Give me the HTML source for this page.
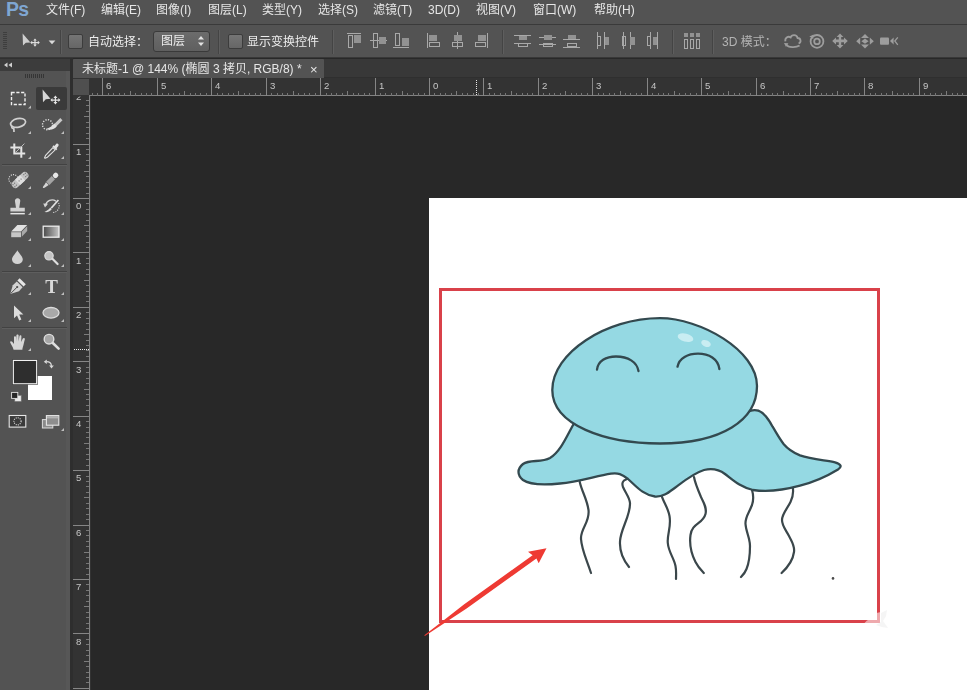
<!DOCTYPE html>
<html lang="zh-CN">
<head>
<meta charset="utf-8">
<title>Photoshop</title>
<style>
html,body{margin:0;padding:0;}
body{width:967px;height:690px;overflow:hidden;background:#282828;position:relative;
 font-family:"Liberation Sans","Noto Sans CJK SC",sans-serif;font-size:12px;color:#e4e4e4;}
.abs{position:absolute;}
#menubar{left:0;top:0;width:967px;height:24px;background:#535353;}
#menubar span,#optbar .t,#tab span{will-change:transform;}
#menubar span{position:absolute;top:2px;line-height:16px;white-space:nowrap;font-size:12px;color:#e6e6e6;}
#ps{position:absolute;left:6px;top:-3px;font-weight:bold;font-size:19.500px;color:#7fa6d2;letter-spacing:-0.8px;line-height:24px;}
#optbar{left:0;top:24px;width:967px;height:34px;background:#535353;border-top:1px solid #3a3a3a;border-bottom:1px solid #383838;box-sizing:border-box;}
#optbar .t{position:absolute;top:9px;line-height:16px;white-space:nowrap;font-size:12px;color:#ececec;}
.sep{position:absolute;top:5px;width:1px;height:24px;background:#444;border-right:1px solid #5e5e5e;}
.chk{position:absolute;top:9px;width:13px;height:13px;border:1px solid #3c3c3c;border-radius:2px;background:linear-gradient(#757575,#666);box-sizing:content-box;}
#sel{position:absolute;left:153px;top:6px;width:55px;height:19px;border:1px solid #3a3a3a;border-radius:3px;background:linear-gradient(#6c6c6c,#5f5f5f);}
#tabstrip{left:73px;top:59px;width:894px;height:19px;background:#383838;border-bottom:1px solid #2f2f2f;box-sizing:border-box;}
#tab{left:73px;top:59px;width:251px;height:19px;background:#535353;border-radius:1px 1px 0 0;}
#tab span{position:absolute;left:9px;top:2px;line-height:17px;font-size:12px;color:#e6e6e6;white-space:nowrap;}
#toolhead{left:0;top:58px;width:70px;height:13px;background:#3c3c3c;border-top:1px solid #303030;box-sizing:border-box;}
#toolbox{left:0;top:71px;width:66px;height:619px;background:#535353;border-right:4px solid #575757;}
#tooledge{left:70px;top:58px;width:3px;height:632px;background:#2e2e2e;}
#doc{left:73px;top:78px;width:894px;height:612px;background:#282828;}
svg{position:absolute;left:0;top:0;will-change:transform;}
.rl{font-family:"Liberation Sans",sans-serif;font-size:9.6px;fill:#c6c6c6;}
</style>
</head>
<body>
<div id="menubar" class="abs">
 <div id="ps">Ps</div>
 <span style="left:46px">文件(F)</span>
 <span style="left:101px">编辑(E)</span>
 <span style="left:156px">图像(I)</span>
 <span style="left:208px">图层(L)</span>
 <span style="left:262px">类型(Y)</span>
 <span style="left:318px">选择(S)</span>
 <span style="left:373px">滤镜(T)</span>
 <span style="left:428px">3D(D)</span>
 <span style="left:476px">视图(V)</span>
 <span style="left:533px">窗口(W)</span>
 <span style="left:594px">帮助(H)</span>
</div>
<div id="optbar" class="abs">
 <div class="sep" style="left:60px"></div>
 <div class="chk" style="left:68px"></div>
 <div class="t" style="left:88px">自动选择：</div>
 <div id="sel"><div class="t" style="left:7px;top:1px">图层</div></div>
 <div class="sep" style="left:218px"></div>
 <div class="chk" style="left:228px"></div>
 <div class="t" style="left:247px">显示变换控件</div>
 <div class="sep" style="left:332px"></div>
 <div class="sep" style="left:502px"></div>
 <div class="sep" style="left:672px"></div>
 <div class="sep" style="left:712px"></div>
 <div class="t" style="left:722px;color:#b4b4b4">3D 模式：</div>
</div>
<div id="tabstrip" class="abs"></div>
<div id="tab" class="abs"><span>未标题-1 @ 144% (椭圆 3 拷贝, RGB/8) *</span><span style="left:237px;font-size:13px">×</span></div>
<div id="toolhead" class="abs"></div>
<div id="toolbox" class="abs"></div>
<div id="tooledge" class="abs"></div>

<!-- main drawing layer -->
<svg width="967" height="690" viewBox="0 0 967 690">
 <!-- rulers -->
 <rect x="73" y="78" width="894" height="18" fill="#333333"/>
 <rect x="73" y="96" width="18" height="594" fill="#333333"/>
 <rect x="73" y="79" width="16" height="16" fill="#4f4f4f"/>
 <line x1="89" y1="95.5" x2="967" y2="95.5" stroke="#828282"/>
 <line x1="89.5" y1="96" x2="89.5" y2="690" stroke="#828282"/>
 <line x1="476.5" y1="80" x2="476.5" y2="95" stroke="#e8e8e8" stroke-dasharray="1 1" shape-rendering="crispEdges"/>
 <line x1="74" y1="349.5" x2="89" y2="349.5" stroke="#e8e8e8" stroke-dasharray="1 1" shape-rendering="crispEdges"/>
 <clipPath id="vrc"><rect x="73" y="96.500" width="17" height="600"/></clipPath>
 <g shape-rendering="crispEdges">
<line x1="92.5" y1="93" x2="92.5" y2="96" stroke="#767676"/>
<line x1="97.5" y1="93" x2="97.5" y2="96" stroke="#767676"/>
<line x1="102.5" y1="78" x2="102.5" y2="96" stroke="#868686"/>
<line x1="108.5" y1="93" x2="108.5" y2="96" stroke="#767676"/>
<line x1="113.5" y1="93" x2="113.5" y2="96" stroke="#767676"/>
<line x1="119.5" y1="93" x2="119.5" y2="96" stroke="#767676"/>
<line x1="124.5" y1="93" x2="124.5" y2="96" stroke="#767676"/>
<line x1="130.5" y1="91" x2="130.5" y2="96" stroke="#7c7c7c"/>
<line x1="135.5" y1="93" x2="135.5" y2="96" stroke="#767676"/>
<line x1="141.5" y1="93" x2="141.5" y2="96" stroke="#767676"/>
<line x1="146.5" y1="93" x2="146.5" y2="96" stroke="#767676"/>
<line x1="151.5" y1="93" x2="151.5" y2="96" stroke="#767676"/>
<line x1="157.5" y1="78" x2="157.5" y2="96" stroke="#868686"/>
<line x1="162.5" y1="93" x2="162.5" y2="96" stroke="#767676"/>
<line x1="168.5" y1="93" x2="168.5" y2="96" stroke="#767676"/>
<line x1="173.5" y1="93" x2="173.5" y2="96" stroke="#767676"/>
<line x1="179.5" y1="93" x2="179.5" y2="96" stroke="#767676"/>
<line x1="184.5" y1="91" x2="184.5" y2="96" stroke="#7c7c7c"/>
<line x1="190.5" y1="93" x2="190.5" y2="96" stroke="#767676"/>
<line x1="195.5" y1="93" x2="195.5" y2="96" stroke="#767676"/>
<line x1="200.5" y1="93" x2="200.5" y2="96" stroke="#767676"/>
<line x1="206.5" y1="93" x2="206.5" y2="96" stroke="#767676"/>
<line x1="211.5" y1="78" x2="211.5" y2="96" stroke="#868686"/>
<line x1="217.5" y1="93" x2="217.5" y2="96" stroke="#767676"/>
<line x1="222.5" y1="93" x2="222.5" y2="96" stroke="#767676"/>
<line x1="228.5" y1="93" x2="228.5" y2="96" stroke="#767676"/>
<line x1="233.5" y1="93" x2="233.5" y2="96" stroke="#767676"/>
<line x1="238.5" y1="91" x2="238.5" y2="96" stroke="#7c7c7c"/>
<line x1="244.5" y1="93" x2="244.5" y2="96" stroke="#767676"/>
<line x1="249.5" y1="93" x2="249.5" y2="96" stroke="#767676"/>
<line x1="255.5" y1="93" x2="255.5" y2="96" stroke="#767676"/>
<line x1="260.5" y1="93" x2="260.5" y2="96" stroke="#767676"/>
<line x1="266.5" y1="78" x2="266.5" y2="96" stroke="#868686"/>
<line x1="271.5" y1="93" x2="271.5" y2="96" stroke="#767676"/>
<line x1="277.5" y1="93" x2="277.5" y2="96" stroke="#767676"/>
<line x1="282.5" y1="93" x2="282.5" y2="96" stroke="#767676"/>
<line x1="287.5" y1="93" x2="287.5" y2="96" stroke="#767676"/>
<line x1="293.5" y1="91" x2="293.5" y2="96" stroke="#7c7c7c"/>
<line x1="298.5" y1="93" x2="298.5" y2="96" stroke="#767676"/>
<line x1="304.5" y1="93" x2="304.5" y2="96" stroke="#767676"/>
<line x1="309.5" y1="93" x2="309.5" y2="96" stroke="#767676"/>
<line x1="315.5" y1="93" x2="315.5" y2="96" stroke="#767676"/>
<line x1="320.5" y1="78" x2="320.5" y2="96" stroke="#868686"/>
<line x1="326.5" y1="93" x2="326.5" y2="96" stroke="#767676"/>
<line x1="331.5" y1="93" x2="331.5" y2="96" stroke="#767676"/>
<line x1="336.5" y1="93" x2="336.5" y2="96" stroke="#767676"/>
<line x1="342.5" y1="93" x2="342.5" y2="96" stroke="#767676"/>
<line x1="347.5" y1="91" x2="347.5" y2="96" stroke="#7c7c7c"/>
<line x1="353.5" y1="93" x2="353.5" y2="96" stroke="#767676"/>
<line x1="358.5" y1="93" x2="358.5" y2="96" stroke="#767676"/>
<line x1="364.5" y1="93" x2="364.5" y2="96" stroke="#767676"/>
<line x1="369.5" y1="93" x2="369.5" y2="96" stroke="#767676"/>
<line x1="375.5" y1="78" x2="375.5" y2="96" stroke="#868686"/>
<line x1="380.5" y1="93" x2="380.5" y2="96" stroke="#767676"/>
<line x1="385.5" y1="93" x2="385.5" y2="96" stroke="#767676"/>
<line x1="391.5" y1="93" x2="391.5" y2="96" stroke="#767676"/>
<line x1="396.5" y1="93" x2="396.5" y2="96" stroke="#767676"/>
<line x1="402.5" y1="91" x2="402.5" y2="96" stroke="#7c7c7c"/>
<line x1="407.5" y1="93" x2="407.5" y2="96" stroke="#767676"/>
<line x1="413.5" y1="93" x2="413.5" y2="96" stroke="#767676"/>
<line x1="418.5" y1="93" x2="418.5" y2="96" stroke="#767676"/>
<line x1="424.5" y1="93" x2="424.5" y2="96" stroke="#767676"/>
<line x1="429.5" y1="78" x2="429.5" y2="96" stroke="#868686"/>
<line x1="434.5" y1="93" x2="434.5" y2="96" stroke="#767676"/>
<line x1="440.5" y1="93" x2="440.5" y2="96" stroke="#767676"/>
<line x1="445.5" y1="93" x2="445.5" y2="96" stroke="#767676"/>
<line x1="451.5" y1="93" x2="451.5" y2="96" stroke="#767676"/>
<line x1="456.5" y1="91" x2="456.5" y2="96" stroke="#7c7c7c"/>
<line x1="462.5" y1="93" x2="462.5" y2="96" stroke="#767676"/>
<line x1="467.5" y1="93" x2="467.5" y2="96" stroke="#767676"/>
<line x1="473.5" y1="93" x2="473.5" y2="96" stroke="#767676"/>
<line x1="478.5" y1="93" x2="478.5" y2="96" stroke="#767676"/>
<line x1="483.5" y1="78" x2="483.5" y2="96" stroke="#868686"/>
<line x1="489.5" y1="93" x2="489.5" y2="96" stroke="#767676"/>
<line x1="494.5" y1="93" x2="494.5" y2="96" stroke="#767676"/>
<line x1="500.5" y1="93" x2="500.5" y2="96" stroke="#767676"/>
<line x1="505.5" y1="93" x2="505.5" y2="96" stroke="#767676"/>
<line x1="511.5" y1="91" x2="511.5" y2="96" stroke="#7c7c7c"/>
<line x1="516.5" y1="93" x2="516.5" y2="96" stroke="#767676"/>
<line x1="522.5" y1="93" x2="522.5" y2="96" stroke="#767676"/>
<line x1="527.5" y1="93" x2="527.5" y2="96" stroke="#767676"/>
<line x1="532.5" y1="93" x2="532.5" y2="96" stroke="#767676"/>
<line x1="538.5" y1="78" x2="538.5" y2="96" stroke="#868686"/>
<line x1="543.5" y1="93" x2="543.5" y2="96" stroke="#767676"/>
<line x1="549.5" y1="93" x2="549.5" y2="96" stroke="#767676"/>
<line x1="554.5" y1="93" x2="554.5" y2="96" stroke="#767676"/>
<line x1="560.5" y1="93" x2="560.5" y2="96" stroke="#767676"/>
<line x1="565.5" y1="91" x2="565.5" y2="96" stroke="#7c7c7c"/>
<line x1="571.5" y1="93" x2="571.5" y2="96" stroke="#767676"/>
<line x1="576.5" y1="93" x2="576.5" y2="96" stroke="#767676"/>
<line x1="581.5" y1="93" x2="581.5" y2="96" stroke="#767676"/>
<line x1="587.5" y1="93" x2="587.5" y2="96" stroke="#767676"/>
<line x1="592.5" y1="78" x2="592.5" y2="96" stroke="#868686"/>
<line x1="598.5" y1="93" x2="598.5" y2="96" stroke="#767676"/>
<line x1="603.5" y1="93" x2="603.5" y2="96" stroke="#767676"/>
<line x1="609.5" y1="93" x2="609.5" y2="96" stroke="#767676"/>
<line x1="614.5" y1="93" x2="614.5" y2="96" stroke="#767676"/>
<line x1="620.5" y1="91" x2="620.5" y2="96" stroke="#7c7c7c"/>
<line x1="625.5" y1="93" x2="625.5" y2="96" stroke="#767676"/>
<line x1="630.5" y1="93" x2="630.5" y2="96" stroke="#767676"/>
<line x1="636.5" y1="93" x2="636.5" y2="96" stroke="#767676"/>
<line x1="641.5" y1="93" x2="641.5" y2="96" stroke="#767676"/>
<line x1="647.5" y1="78" x2="647.5" y2="96" stroke="#868686"/>
<line x1="652.5" y1="93" x2="652.5" y2="96" stroke="#767676"/>
<line x1="658.5" y1="93" x2="658.5" y2="96" stroke="#767676"/>
<line x1="663.5" y1="93" x2="663.5" y2="96" stroke="#767676"/>
<line x1="668.5" y1="93" x2="668.5" y2="96" stroke="#767676"/>
<line x1="674.5" y1="91" x2="674.5" y2="96" stroke="#7c7c7c"/>
<line x1="679.5" y1="93" x2="679.5" y2="96" stroke="#767676"/>
<line x1="685.5" y1="93" x2="685.5" y2="96" stroke="#767676"/>
<line x1="690.5" y1="93" x2="690.5" y2="96" stroke="#767676"/>
<line x1="696.5" y1="93" x2="696.5" y2="96" stroke="#767676"/>
<line x1="701.5" y1="78" x2="701.5" y2="96" stroke="#868686"/>
<line x1="707.5" y1="93" x2="707.5" y2="96" stroke="#767676"/>
<line x1="712.5" y1="93" x2="712.5" y2="96" stroke="#767676"/>
<line x1="717.5" y1="93" x2="717.5" y2="96" stroke="#767676"/>
<line x1="723.5" y1="93" x2="723.5" y2="96" stroke="#767676"/>
<line x1="728.5" y1="91" x2="728.5" y2="96" stroke="#7c7c7c"/>
<line x1="734.5" y1="93" x2="734.5" y2="96" stroke="#767676"/>
<line x1="739.5" y1="93" x2="739.5" y2="96" stroke="#767676"/>
<line x1="745.5" y1="93" x2="745.5" y2="96" stroke="#767676"/>
<line x1="750.5" y1="93" x2="750.5" y2="96" stroke="#767676"/>
<line x1="756.5" y1="78" x2="756.5" y2="96" stroke="#868686"/>
<line x1="761.5" y1="93" x2="761.5" y2="96" stroke="#767676"/>
<line x1="766.5" y1="93" x2="766.5" y2="96" stroke="#767676"/>
<line x1="772.5" y1="93" x2="772.5" y2="96" stroke="#767676"/>
<line x1="777.5" y1="93" x2="777.5" y2="96" stroke="#767676"/>
<line x1="783.5" y1="91" x2="783.5" y2="96" stroke="#7c7c7c"/>
<line x1="788.5" y1="93" x2="788.5" y2="96" stroke="#767676"/>
<line x1="794.5" y1="93" x2="794.5" y2="96" stroke="#767676"/>
<line x1="799.5" y1="93" x2="799.5" y2="96" stroke="#767676"/>
<line x1="805.5" y1="93" x2="805.5" y2="96" stroke="#767676"/>
<line x1="810.5" y1="78" x2="810.5" y2="96" stroke="#868686"/>
<line x1="815.5" y1="93" x2="815.5" y2="96" stroke="#767676"/>
<line x1="821.5" y1="93" x2="821.5" y2="96" stroke="#767676"/>
<line x1="826.5" y1="93" x2="826.5" y2="96" stroke="#767676"/>
<line x1="832.5" y1="93" x2="832.5" y2="96" stroke="#767676"/>
<line x1="837.5" y1="91" x2="837.5" y2="96" stroke="#7c7c7c"/>
<line x1="843.5" y1="93" x2="843.5" y2="96" stroke="#767676"/>
<line x1="848.5" y1="93" x2="848.5" y2="96" stroke="#767676"/>
<line x1="854.5" y1="93" x2="854.5" y2="96" stroke="#767676"/>
<line x1="859.5" y1="93" x2="859.5" y2="96" stroke="#767676"/>
<line x1="864.5" y1="78" x2="864.5" y2="96" stroke="#868686"/>
<line x1="870.5" y1="93" x2="870.5" y2="96" stroke="#767676"/>
<line x1="875.5" y1="93" x2="875.5" y2="96" stroke="#767676"/>
<line x1="881.5" y1="93" x2="881.5" y2="96" stroke="#767676"/>
<line x1="886.5" y1="93" x2="886.5" y2="96" stroke="#767676"/>
<line x1="892.5" y1="91" x2="892.5" y2="96" stroke="#7c7c7c"/>
<line x1="897.5" y1="93" x2="897.5" y2="96" stroke="#767676"/>
<line x1="903.5" y1="93" x2="903.5" y2="96" stroke="#767676"/>
<line x1="908.5" y1="93" x2="908.5" y2="96" stroke="#767676"/>
<line x1="913.5" y1="93" x2="913.5" y2="96" stroke="#767676"/>
<line x1="919.5" y1="78" x2="919.5" y2="96" stroke="#868686"/>
<line x1="924.5" y1="93" x2="924.5" y2="96" stroke="#767676"/>
<line x1="930.5" y1="93" x2="930.5" y2="96" stroke="#767676"/>
<line x1="935.5" y1="93" x2="935.5" y2="96" stroke="#767676"/>
<line x1="941.5" y1="93" x2="941.5" y2="96" stroke="#767676"/>
<line x1="946.5" y1="91" x2="946.5" y2="96" stroke="#7c7c7c"/>
<line x1="952.5" y1="93" x2="952.5" y2="96" stroke="#767676"/>
<line x1="957.5" y1="93" x2="957.5" y2="96" stroke="#767676"/>
<line x1="962.5" y1="93" x2="962.5" y2="96" stroke="#767676"/>
<text x="106" y="89" class="rl">6</text>
<text x="161" y="89" class="rl">5</text>
<text x="215" y="89" class="rl">4</text>
<text x="270" y="89" class="rl">3</text>
<text x="324" y="89" class="rl">2</text>
<text x="379" y="89" class="rl">1</text>
<text x="433" y="89" class="rl">0</text>
<text x="487" y="89" class="rl">1</text>
<text x="542" y="89" class="rl">2</text>
<text x="596" y="89" class="rl">3</text>
<text x="651" y="89" class="rl">4</text>
<text x="705" y="89" class="rl">5</text>
<text x="760" y="89" class="rl">6</text>
<text x="814" y="89" class="rl">7</text>
<text x="868" y="89" class="rl">8</text>
<text x="923" y="89" class="rl">9</text>
<line x1="86" y1="100.5" x2="89" y2="100.5" stroke="#767676"/>
<line x1="86" y1="105.5" x2="89" y2="105.5" stroke="#767676"/>
<line x1="86" y1="111.5" x2="89" y2="111.5" stroke="#767676"/>
<line x1="84" y1="116.5" x2="89" y2="116.5" stroke="#7c7c7c"/>
<line x1="86" y1="122.5" x2="89" y2="122.5" stroke="#767676"/>
<line x1="86" y1="127.5" x2="89" y2="127.5" stroke="#767676"/>
<line x1="86" y1="133.5" x2="89" y2="133.5" stroke="#767676"/>
<line x1="86" y1="138.5" x2="89" y2="138.5" stroke="#767676"/>
<line x1="73" y1="144.5" x2="89" y2="144.5" stroke="#868686"/>
<line x1="86" y1="149.5" x2="89" y2="149.5" stroke="#767676"/>
<line x1="86" y1="154.5" x2="89" y2="154.5" stroke="#767676"/>
<line x1="86" y1="160.5" x2="89" y2="160.5" stroke="#767676"/>
<line x1="86" y1="165.5" x2="89" y2="165.5" stroke="#767676"/>
<line x1="84" y1="171.5" x2="89" y2="171.5" stroke="#7c7c7c"/>
<line x1="86" y1="176.5" x2="89" y2="176.5" stroke="#767676"/>
<line x1="86" y1="182.5" x2="89" y2="182.5" stroke="#767676"/>
<line x1="86" y1="187.5" x2="89" y2="187.5" stroke="#767676"/>
<line x1="86" y1="193.5" x2="89" y2="193.5" stroke="#767676"/>
<line x1="73" y1="198.5" x2="89" y2="198.5" stroke="#868686"/>
<line x1="86" y1="203.5" x2="89" y2="203.5" stroke="#767676"/>
<line x1="86" y1="209.5" x2="89" y2="209.5" stroke="#767676"/>
<line x1="86" y1="214.5" x2="89" y2="214.5" stroke="#767676"/>
<line x1="86" y1="220.5" x2="89" y2="220.5" stroke="#767676"/>
<line x1="84" y1="225.5" x2="89" y2="225.5" stroke="#7c7c7c"/>
<line x1="86" y1="231.5" x2="89" y2="231.5" stroke="#767676"/>
<line x1="86" y1="236.5" x2="89" y2="236.5" stroke="#767676"/>
<line x1="86" y1="242.5" x2="89" y2="242.5" stroke="#767676"/>
<line x1="86" y1="247.5" x2="89" y2="247.5" stroke="#767676"/>
<line x1="73" y1="252.5" x2="89" y2="252.5" stroke="#868686"/>
<line x1="86" y1="258.5" x2="89" y2="258.5" stroke="#767676"/>
<line x1="86" y1="263.5" x2="89" y2="263.5" stroke="#767676"/>
<line x1="86" y1="269.5" x2="89" y2="269.5" stroke="#767676"/>
<line x1="86" y1="274.5" x2="89" y2="274.5" stroke="#767676"/>
<line x1="84" y1="280.5" x2="89" y2="280.5" stroke="#7c7c7c"/>
<line x1="86" y1="285.5" x2="89" y2="285.5" stroke="#767676"/>
<line x1="86" y1="291.5" x2="89" y2="291.5" stroke="#767676"/>
<line x1="86" y1="296.5" x2="89" y2="296.5" stroke="#767676"/>
<line x1="86" y1="301.5" x2="89" y2="301.5" stroke="#767676"/>
<line x1="73" y1="307.5" x2="89" y2="307.5" stroke="#868686"/>
<line x1="86" y1="312.5" x2="89" y2="312.5" stroke="#767676"/>
<line x1="86" y1="318.5" x2="89" y2="318.5" stroke="#767676"/>
<line x1="86" y1="323.5" x2="89" y2="323.5" stroke="#767676"/>
<line x1="86" y1="329.5" x2="89" y2="329.5" stroke="#767676"/>
<line x1="84" y1="334.5" x2="89" y2="334.5" stroke="#7c7c7c"/>
<line x1="86" y1="340.5" x2="89" y2="340.5" stroke="#767676"/>
<line x1="86" y1="345.5" x2="89" y2="345.5" stroke="#767676"/>
<line x1="86" y1="350.5" x2="89" y2="350.5" stroke="#767676"/>
<line x1="86" y1="356.5" x2="89" y2="356.5" stroke="#767676"/>
<line x1="73" y1="361.5" x2="89" y2="361.5" stroke="#868686"/>
<line x1="86" y1="367.5" x2="89" y2="367.5" stroke="#767676"/>
<line x1="86" y1="372.5" x2="89" y2="372.5" stroke="#767676"/>
<line x1="86" y1="378.5" x2="89" y2="378.5" stroke="#767676"/>
<line x1="86" y1="383.5" x2="89" y2="383.5" stroke="#767676"/>
<line x1="84" y1="389.5" x2="89" y2="389.5" stroke="#7c7c7c"/>
<line x1="86" y1="394.5" x2="89" y2="394.5" stroke="#767676"/>
<line x1="86" y1="399.5" x2="89" y2="399.5" stroke="#767676"/>
<line x1="86" y1="405.5" x2="89" y2="405.5" stroke="#767676"/>
<line x1="86" y1="410.5" x2="89" y2="410.5" stroke="#767676"/>
<line x1="73" y1="416.5" x2="89" y2="416.5" stroke="#868686"/>
<line x1="86" y1="421.5" x2="89" y2="421.5" stroke="#767676"/>
<line x1="86" y1="427.5" x2="89" y2="427.5" stroke="#767676"/>
<line x1="86" y1="432.5" x2="89" y2="432.5" stroke="#767676"/>
<line x1="86" y1="437.5" x2="89" y2="437.5" stroke="#767676"/>
<line x1="84" y1="443.5" x2="89" y2="443.5" stroke="#7c7c7c"/>
<line x1="86" y1="448.5" x2="89" y2="448.5" stroke="#767676"/>
<line x1="86" y1="454.5" x2="89" y2="454.5" stroke="#767676"/>
<line x1="86" y1="459.5" x2="89" y2="459.5" stroke="#767676"/>
<line x1="86" y1="465.5" x2="89" y2="465.5" stroke="#767676"/>
<line x1="73" y1="470.5" x2="89" y2="470.5" stroke="#868686"/>
<line x1="86" y1="476.5" x2="89" y2="476.5" stroke="#767676"/>
<line x1="86" y1="481.5" x2="89" y2="481.5" stroke="#767676"/>
<line x1="86" y1="486.5" x2="89" y2="486.5" stroke="#767676"/>
<line x1="86" y1="492.5" x2="89" y2="492.5" stroke="#767676"/>
<line x1="84" y1="497.5" x2="89" y2="497.5" stroke="#7c7c7c"/>
<line x1="86" y1="503.5" x2="89" y2="503.5" stroke="#767676"/>
<line x1="86" y1="508.5" x2="89" y2="508.5" stroke="#767676"/>
<line x1="86" y1="514.5" x2="89" y2="514.5" stroke="#767676"/>
<line x1="86" y1="519.5" x2="89" y2="519.5" stroke="#767676"/>
<line x1="73" y1="525.5" x2="89" y2="525.5" stroke="#868686"/>
<line x1="86" y1="530.5" x2="89" y2="530.5" stroke="#767676"/>
<line x1="86" y1="535.5" x2="89" y2="535.5" stroke="#767676"/>
<line x1="86" y1="541.5" x2="89" y2="541.5" stroke="#767676"/>
<line x1="86" y1="546.5" x2="89" y2="546.5" stroke="#767676"/>
<line x1="84" y1="552.5" x2="89" y2="552.5" stroke="#7c7c7c"/>
<line x1="86" y1="557.5" x2="89" y2="557.5" stroke="#767676"/>
<line x1="86" y1="563.5" x2="89" y2="563.5" stroke="#767676"/>
<line x1="86" y1="568.5" x2="89" y2="568.5" stroke="#767676"/>
<line x1="86" y1="574.5" x2="89" y2="574.5" stroke="#767676"/>
<line x1="73" y1="579.5" x2="89" y2="579.5" stroke="#868686"/>
<line x1="86" y1="584.5" x2="89" y2="584.5" stroke="#767676"/>
<line x1="86" y1="590.5" x2="89" y2="590.5" stroke="#767676"/>
<line x1="86" y1="595.5" x2="89" y2="595.5" stroke="#767676"/>
<line x1="86" y1="601.5" x2="89" y2="601.5" stroke="#767676"/>
<line x1="84" y1="606.5" x2="89" y2="606.5" stroke="#7c7c7c"/>
<line x1="86" y1="612.5" x2="89" y2="612.5" stroke="#767676"/>
<line x1="86" y1="617.5" x2="89" y2="617.5" stroke="#767676"/>
<line x1="86" y1="623.5" x2="89" y2="623.5" stroke="#767676"/>
<line x1="86" y1="628.5" x2="89" y2="628.5" stroke="#767676"/>
<line x1="73" y1="633.5" x2="89" y2="633.5" stroke="#868686"/>
<line x1="86" y1="639.5" x2="89" y2="639.5" stroke="#767676"/>
<line x1="86" y1="644.5" x2="89" y2="644.5" stroke="#767676"/>
<line x1="86" y1="650.5" x2="89" y2="650.5" stroke="#767676"/>
<line x1="86" y1="655.5" x2="89" y2="655.5" stroke="#767676"/>
<line x1="84" y1="661.5" x2="89" y2="661.5" stroke="#7c7c7c"/>
<line x1="86" y1="666.5" x2="89" y2="666.5" stroke="#767676"/>
<line x1="86" y1="672.5" x2="89" y2="672.5" stroke="#767676"/>
<line x1="86" y1="677.5" x2="89" y2="677.5" stroke="#767676"/>
<line x1="86" y1="682.5" x2="89" y2="682.5" stroke="#767676"/>
<line x1="73" y1="688.5" x2="89" y2="688.5" stroke="#868686"/>
<text x="76" y="100.4" class="rl" clip-path="url(#vrc)">2</text>
<text x="76" y="154.9" class="rl" clip-path="url(#vrc)">1</text>
<text x="76" y="209.3" class="rl" clip-path="url(#vrc)">0</text>
<text x="76" y="263.7" class="rl" clip-path="url(#vrc)">1</text>
<text x="76" y="318.2" class="rl" clip-path="url(#vrc)">2</text>
<text x="76" y="372.6" class="rl" clip-path="url(#vrc)">3</text>
<text x="76" y="427.0" class="rl" clip-path="url(#vrc)">4</text>
<text x="76" y="481.4" class="rl" clip-path="url(#vrc)">5</text>
<text x="76" y="535.9" class="rl" clip-path="url(#vrc)">6</text>
<text x="76" y="590.3" class="rl" clip-path="url(#vrc)">7</text>
<text x="76" y="644.7" class="rl" clip-path="url(#vrc)">8</text>
<text x="76" y="699.2" class="rl" clip-path="url(#vrc)">9</text>
 </g>
 <!-- ===== toolbox icons ===== -->
 <g id="tools">
  <!-- collapse arrows -->
  <path d="M7.5 62.5 L7.5 67.5 L4 65 Z M12 62.5 L12 67.5 L8.5 65 Z" fill="#d0d0d0"/>
  <!-- grip -->
  <g stroke="#353535" stroke-width="1" shape-rendering="crispEdges">
   <line x1="25.5" y1="74" x2="25.5" y2="78"/><line x1="27.5" y1="74" x2="27.5" y2="78"/><line x1="29.5" y1="74" x2="29.5" y2="78"/><line x1="31.5" y1="74" x2="31.5" y2="78"/><line x1="33.5" y1="74" x2="33.5" y2="78"/><line x1="35.5" y1="74" x2="35.5" y2="78"/><line x1="37.5" y1="74" x2="37.5" y2="78"/><line x1="39.5" y1="74" x2="39.5" y2="78"/><line x1="41.5" y1="74" x2="41.5" y2="78"/><line x1="43.5" y1="74" x2="43.5" y2="78"/>
  </g>
  <!-- selected tool bg -->
  <rect x="36" y="87" width="31" height="23" rx="2" fill="#3a3a3a"/>
  <!-- separators -->
  <g shape-rendering="crispEdges">
   <rect x="2" y="164" width="65" height="1" fill="#424242"/><rect x="2" y="165" width="65" height="1" fill="#5e5e5e"/>
   <rect x="2" y="271" width="65" height="1" fill="#424242"/><rect x="2" y="272" width="65" height="1" fill="#5e5e5e"/>
   <rect x="2" y="327" width="65" height="1" fill="#424242"/><rect x="2" y="328" width="65" height="1" fill="#5e5e5e"/>
  </g>
  <!-- flyout marker triangles -->
  <g fill="#bdbdbd">
   <path d="M31 105.5 V108.5 H28 Z"/><path d="M31 131 V134 H28 Z"/><path d="M31 156 V159 H28 Z"/>
   <path d="M64 131 V134 H61 Z"/><path d="M64 156 V159 H61 Z"/>
   <path d="M31 186 V189 H28 Z"/><path d="M64 186 V189 H61 Z"/>
   <path d="M31 212 V215 H28 Z"/><path d="M64 212 V215 H61 Z"/>
   <path d="M31 238 V241 H28 Z"/><path d="M64 238 V241 H61 Z"/>
   <path d="M31 264 V267 H28 Z"/><path d="M64 264 V267 H61 Z"/>
   <path d="M31 292 V295 H28 Z"/><path d="M64 292 V295 H61 Z"/>
   <path d="M31 319 V322 H28 Z"/><path d="M64 319 V322 H61 Z"/>
   <path d="M31 348 V351 H28 Z"/>
   <path d="M64 428 V431 H61 Z"/>
  </g>
  <!-- marquee -->
  <rect x="11.5" y="92.5" width="13.5" height="12" fill="none" stroke="#efefef" stroke-width="1.4" stroke-dasharray="3.2 1.6"/>
  <!-- move tool -->
  <path d="M42.6 89.5 L43 102.3 L45.8 99.3 L50.5 98.8 Z" fill="#d6d6d6"/>
  <path d="M55.4 95.6 L57.4 98 H56 V99.4 H58.4 V98 L60.4 100 L58.4 102 V100.7 H56 V102 H57.4 L55.4 104.4 L53.4 102 H54.8 V100.7 H52.4 V102 L50.4 100 L52.4 98 V99.4 H54.8 V98 H53.4 Z" fill="#e4e4e4"/>
  <!-- lasso -->
  <ellipse cx="18.1" cy="122.9" rx="7.6" ry="4.3" transform="rotate(-12 18.1 122.9)" fill="none" stroke="#d0d0d0" stroke-width="1.7"/>
  <path d="M12.2 126.2 C11.2 127.6 12.4 128.8 13.8 128.2 L14 132" fill="none" stroke="#d0d0d0" stroke-width="1.7"/>
  <!-- quick select -->
  <circle cx="47.5" cy="124.7" r="5" fill="none" stroke="#e0e0e0" stroke-width="1.4" stroke-dasharray="1.2 1.4"/>
  <path d="M60.3 118 L62.5 120.2 L56 126.8 L53.8 124.6 Z" fill="#c8c8c8"/>
  <path d="M56.8 126 L54.2 123.600 C52.600 126.200 49.600 128 45.800 129 C49.800 130.600 54.800 129.600 56.800 126 Z" fill="#e0e0e0"/>
  <!-- crop -->
  <g fill="none" stroke="#e4e4e4" stroke-width="2">
   <path d="M14.3 143.5 V153.6 H25.2"/><path d="M10.4 147.4 H21.3 V157.8"/>
  </g>
  <path d="M15.6 152.4 L24.4 143.6" stroke="#bdbdbd" stroke-width="1" fill="none"/>
  <!-- eyedropper -->
  <path d="M56.2 144 C57.4 142.8 59.4 144.6 58.4 146 L56.6 148.2 L57.4 149 L56.2 150.2 L52.4 146.4 L53.6 145.2 L54.4 146 Z" fill="#e0e0e0"/>
  <path d="M53 147.6 L55.2 149.8 L47.4 157.2 L45 158.2 L44.6 157.6 L45.6 155.4 Z" fill="none" stroke="#dedede" stroke-width="1.1"/>
  <!-- healing brush -->
  <circle cx="13.4" cy="179.2" r="4.6" fill="none" stroke="#dcdcdc" stroke-width="1.1" stroke-dasharray="1.1 1.2"/>
  <g transform="translate(1.1 0) rotate(-43 19 180)">
   <rect x="9" y="176.3" width="20" height="7.4" rx="3.6" fill="#c4c4c4"/>
   <rect x="15.6" y="176.3" width="6.8" height="7.4" fill="#dedede"/>
   <g fill="#6a6a6a"><circle cx="10.6" cy="178.6" r=".6"/><circle cx="12.8" cy="181.2" r=".6"/><circle cx="10.6" cy="181.4" r=".6"/><circle cx="12.8" cy="178.6" r=".6"/><circle cx="25.4" cy="178.6" r=".6"/><circle cx="27.4" cy="181.2" r=".6"/><circle cx="25.4" cy="181.4" r=".6"/><circle cx="27.4" cy="178.6" r=".6"/><circle cx="17.6" cy="180" r=".6"/><circle cx="20.4" cy="180" r=".6"/></g>
  </g>
  <!-- pencil -->
  <g transform="rotate(45 50.5 180.5)">
   <rect x="48" y="170.600" width="5" height="5.400" rx="2.200" fill="#e8e8e8"/>
   <rect x="48.200" y="176.400" width="4.600" height="8" fill="#a4a4a4"/>
   <path d="M48.600 185 H52.400 L51.700 188 C51.700 189.500 51.300 190.600 50.500 191.200 C49.700 190.600 49.300 189.500 49.300 188 Z" fill="#d6d6d6"/>
  </g>
  <!-- stamp -->
  <path d="M15 201.6 A2.7 2.7 0 1 1 20.2 201.6 L19.2 207.8 H24.8 V211.6 H10.4 V207.8 H16 Z" fill="#d2d2d2"/>
  <rect x="10.4" y="212.900" width="14.4" height="1.500" fill="#e6e6e6"/>
  <!-- history brush -->
  <path d="M45.6 205.6 A6.6 6.6 0 0 1 56 201.2" fill="none" stroke="#d6d6d6" stroke-width="1.4"/>
  <path d="M43.2 203.4 L48 203.8 L45 207.6 Z" fill="#d6d6d6"/>
  <path d="M58.6 203 A6.8 6.8 0 0 1 52 212.6" fill="none" stroke="#d6d6d6" stroke-width="1.1" stroke-dasharray="1.1 1.2"/>
  <path d="M57.8 199.4 L59 200.4 L52 208.6 L50.6 207.4 Z" fill="#e2e2e2"/>
  <path d="M50.2 207.6 L51.8 209 C50.6 211.4 47.4 212.6 44.4 212 C47 211 48.8 209.6 50.2 207.6 Z" fill="#dadada"/>
  <!-- eraser -->
  <path d="M17.4 225 H27.2 L21 231.4 H11.2 Z" fill="#e2e2e2"/>
  <path d="M11.2 232.2 H21 V237.2 H11.2 Z" fill="#c6c6c6"/>
  <path d="M21.8 231.8 L27.2 226.2 V231 L21.8 236.8 Z" fill="#a9a9a9"/>
  <!-- gradient -->
  <defs><linearGradient id="gr" x1="0" x2="1" y1="0" y2="0"><stop offset="0" stop-color="#4a4a4a"/><stop offset="1" stop-color="#c4c4c4"/></linearGradient></defs>
  <rect x="43.2" y="226.2" width="15.8" height="11" fill="url(#gr)" stroke="#ededed" stroke-width="1.3"/>
  <!-- blur drop -->
  <path d="M17.4 250.2 C19 253.4 22.8 256.4 22.8 259.4 A5.4 4.6 0 0 1 12 259.4 C12 256.4 15.8 253.4 17.4 250.2 Z" fill="#d2d2d2"/>
  <!-- dodge -->
  <circle cx="49" cy="255.800" r="4.200" fill="#c4c4c4" stroke="#dedede" stroke-width="1.200"/>
  <path d="M52.400 258.800 L57.600 264" stroke="#dedede" stroke-width="2.2" stroke-linecap="round" fill="none"/>
  <!-- pen -->
  <path d="M19.6 278.2 L25.8 284.2 L23.6 286.4 L17.4 280.4 Z" fill="#e6e6e6"/>
  <path d="M16.8 281.4 L22.6 287.2 L19 291.2 L10.2 294 L12.8 285.2 Z" fill="#d2d2d2"/>
  <path d="M10.6 293.6 L17 287.2" stroke="#4a4a4a" stroke-width="1" fill="none"/>
  <circle cx="17.2" cy="287" r="1.1" fill="#4a4a4a"/>
  <!-- T is real text below -->
  <text x="51.6" y="293.4" text-anchor="middle" font-family="Liberation Serif,serif" font-weight="bold" font-size="19" fill="#d8d8d8">T</text>
  <!-- path select arrow -->
  <path d="M14 305.6 V318.2 L17 315.4 L19.2 320.4 L21.4 319.4 L19.2 314.6 L23.4 314.4 Z" fill="#dcdcdc"/>
  <!-- ellipse tool -->
  <ellipse cx="51" cy="312.8" rx="8" ry="5.3" fill="#a8a8a8" stroke="#dcdcdc" stroke-width="1.3"/>
  <!-- hand -->
  <path d="M13.6 349.8 C12.8 346.8 11 344.6 10.2 342.6 C9.8 341.4 11.2 340.6 12.2 341.8 L14 344 V337.2 C14 335.8 16 335.8 16 337.2 V341.6 L16.4 335.6 C16.4 334.2 18.6 334.2 18.6 335.6 V341.4 L19.4 336.2 C19.6 334.8 21.6 335 21.4 336.4 L21.2 342 L22.8 338.6 C23.4 337.4 25.2 338 24.8 339.4 C24 342 23.6 344.8 23 346.6 C22.6 348 22.4 348.8 22.4 349.8 Z" fill="#d6d6d6"/>
  <!-- zoom -->
  <circle cx="49" cy="339.2" r="4.8" fill="#a6a6a6" stroke="#dedede" stroke-width="1.4"/>
  <path d="M52.8 343 L58.6 348.6" stroke="#dedede" stroke-width="2.6" stroke-linecap="round" fill="none"/>
  <!-- swatches -->
  <rect x="28" y="376" width="24" height="24" fill="#ffffff"/>
  <rect x="13.300" y="360.400" width="23.400" height="23.400" fill="#2e2e2e" stroke="#f2f2f2" stroke-width="1.200"/>
  <rect x="12.400" y="359.500" width="25.200" height="25.200" fill="none" stroke="#444" stroke-width=".6"/>
  <!-- swap arrows -->
  <path d="M46.4 361.6 C49.6 361.6 51.4 363 51.4 366" fill="none" stroke="#d8d8d8" stroke-width="1.2"/>
  <path d="M46.8 359.4 V364 L43.8 361.7 Z" fill="#d8d8d8"/>
  <path d="M49.2 365.4 H53.8 L51.5 368.4 Z" fill="#d8d8d8"/>
  <!-- default colors -->
  <rect x="14.8" y="395.4" width="6.4" height="6" fill="#e8e8e8" stroke="#777" stroke-width=".6"/>
  <rect x="11.6" y="392.4" width="6.2" height="6" fill="#262626" stroke="#e0e0e0" stroke-width=".9"/>
  <!-- quick mask -->
  <rect x="9.2" y="415.5" width="16.6" height="11.6" fill="#3a3a3a" stroke="#e6e6e6" stroke-width="1.1"/>
  <circle cx="17.5" cy="421.3" r="3.6" fill="none" stroke="#e6e6e6" stroke-width="1.1" stroke-dasharray="1 1.1"/>
  <!-- screen mode -->
  <rect x="42.4" y="419.6" width="10.4" height="8.4" fill="#8a8a8a" stroke="#dcdcdc" stroke-width="1"/>
  <rect x="46.4" y="415.6" width="12.4" height="9.6" fill="#8e8e8e" stroke="#e6e6e6" stroke-width="1.1"/>
  <rect x="47" y="416.2" width="11.2" height="2.2" fill="#b4b4b4"/>
 </g>
 <!-- ===== options bar icons ===== -->
 <g id="opticons">
  <!-- gripper -->
  <g fill="#3e3e3e" shape-rendering="crispEdges">
   <rect x="3" y="32" width="4" height="1"/><rect x="3" y="34" width="4" height="1"/><rect x="3" y="36" width="4" height="1"/><rect x="3" y="38" width="4" height="1"/><rect x="3" y="40" width="4" height="1"/><rect x="3" y="42" width="4" height="1"/><rect x="3" y="44" width="4" height="1"/><rect x="3" y="46" width="4" height="1"/><rect x="3" y="48" width="4" height="1"/>
  </g>
  <!-- move tool icon -->
  <path d="M22.6 33.6 L23 45.6 L25.8 42.8 L30.4 42.4 Z" fill="#cfcfcf"/>
  <path d="M35 38.4 L36.8 40.6 H35.6 V42 H37.8 V40.8 L39.8 42.6 L37.8 44.4 V43.2 H35.6 V44.6 H36.8 L35 46.8 L33.2 44.6 H34.4 V43.2 H32.2 V44.4 L30.2 42.6 L32.2 40.8 V42 H34.4 V40.6 H33.2 Z" fill="#dedede"/>
  <path d="M48.6 40.4 H55.4 L52 44.2 Z" fill="#dadada"/>
  <!-- select arrows -->
  <path d="M198 39.4 L201 36 L204 39.4 Z M198 42.6 L201 46 L204 42.6 Z" fill="#e2e2e2"/>
  <!-- align icons -->
  <g fill="none" stroke="#a9a9a9" stroke-width="1" shape-rendering="crispEdges">
   <!-- 1 top edges -->
   <line x1="347" y1="33.5" x2="361" y2="33.5"/><rect x="348.5" y="35.5" width="4" height="12"/>
   <!-- 2 v centers -->
   <line x1="370" y1="40.5" x2="387" y2="40.5"/><rect x="373.5" y="33.5" width="4" height="14"/>
   <!-- 3 bottom edges -->
   <line x1="393" y1="47.5" x2="409" y2="47.5"/><rect x="395.500" y="33.5" width="4" height="12"/>
   <!-- 4 left edges -->
   <line x1="427.5" y1="33" x2="427.5" y2="48"/><rect x="429.5" y="42.5" width="10" height="4"/>
   <!-- 5 h centers -->
   <line x1="457.5" y1="32" x2="457.5" y2="49"/><rect x="452.5" y="42.5" width="10" height="4"/>
   <!-- 6 right edges -->
   <line x1="487.5" y1="33" x2="487.5" y2="48"/><rect x="475.5" y="42.500" width="10" height="4"/>
   <!-- 7 distribute top -->
   <line x1="514" y1="35.5" x2="531" y2="35.5"/><line x1="514" y1="43.5" x2="531" y2="43.5"/><rect x="518.5" y="43.5" width="9" height="3"/>
   <!-- 8 distribute vcenter -->
   <line x1="539" y1="37.5" x2="556" y2="37.5"/><line x1="539" y1="44.5" x2="556" y2="44.5"/><rect x="543.5" y="43.5" width="9" height="3"/>
   <!-- 9 distribute bottom -->
   <line x1="563" y1="39.5" x2="580" y2="39.5"/><line x1="563" y1="47.5" x2="580" y2="47.5"/><rect x="567.5" y="43.5" width="9" height="3"/>
   <!-- 10 distribute left -->
   <line x1="597.5" y1="32" x2="597.5" y2="49"/><line x1="604.5" y1="32" x2="604.5" y2="49"/><rect x="597.5" y="36.5" width="3" height="9"/>
   <!-- 11 distribute hcenter -->
   <line x1="623.5" y1="32" x2="623.5" y2="49"/><line x1="630.5" y1="32" x2="630.5" y2="49"/><rect x="622.5" y="36.5" width="3" height="9"/>
   <!-- 12 distribute right -->
   <line x1="650.5" y1="32" x2="650.5" y2="49"/><line x1="657.5" y1="32" x2="657.5" y2="49"/><rect x="647.5" y="36.500" width="3" height="9"/>
   <!-- auto align -->
   <rect x="684.5" y="39.5" width="3" height="9"/><rect x="690.5" y="39.5" width="3" height="9"/><rect x="696.5" y="39.5" width="3" height="9"/>
  </g>
  <g fill="#929292" shape-rendering="crispEdges">
   <rect x="354" y="35" width="7" height="8"/>
   <rect x="379" y="37" width="7" height="7"/>
   <rect x="402" y="38" width="7" height="8"/>
   <rect x="429" y="35" width="8" height="6"/>
   <rect x="454" y="35" width="8" height="6"/>
   <rect x="478" y="35" width="8" height="6"/>
   <rect x="519" y="36" width="8" height="4"/>
   <rect x="544" y="35" width="8" height="5"/>
   <rect x="568" y="35" width="8" height="4"/>
   <rect x="605" y="37" width="4" height="8"/>
   <rect x="630" y="37" width="5" height="8"/>
   <rect x="653" y="37" width="4" height="8"/>
   <rect x="684" y="33" width="4" height="4"/><rect x="690" y="33" width="4" height="4"/><rect x="696" y="33" width="4" height="4"/>
  </g>
  <!-- 3D icons -->
  <g fill="none" stroke="#9d9d9d" stroke-width="1.8">
   <!-- rotate 3d -->
   <path d="M785.4 41.4 C784.6 38 788 35.6 790.6 37.4 C791.4 34.4 796.8 34 797.6 38 C801 38 801.6 42.6 798.6 43.4"/>
   <path d="M786.6 44.600 C788 47.8 796 47.800 799.600 45.600"/>
   <!-- roll -->
   <circle cx="817" cy="41.400" r="6.4"/><circle cx="817" cy="41.400" r="2.800"/>
  </g>
  <path d="M809.400 36.400 L813.600 34.600 L813.200 39 Z" fill="#9d9d9d"/>
  <path d="M784 43 L788.400 43.200 L786 47 Z" fill="#9d9d9d"/>
  <!-- pan 3d -->
  <path d="M840 33.400 L843.400 37 H841.200 V39.600 H844 V37.600 L847.800 41 L844 44.400 V42.200 H841.200 V45 H843.400 L840 48.600 L836.600 45 H838.800 V42.200 H836 V44.400 L832.200 41 L836 37.600 V39.600 H838.800 V37 H836.600 Z" fill="#9d9d9d"/>
  <!-- slide 3d -->
  <path d="M865 34 L869 38 H861 Z M865 48.400 L869 44.400 H861 Z M856.200 41.200 L860.200 37.600 V44.800 Z M873.800 41.200 L869.800 37.600 V44.800 Z" fill="#9d9d9d"/>
  <path d="M865 38.600 L868.600 41.200 L865 43.800 L861.400 41.200 Z" fill="#9d9d9d"/>
  <!-- scale 3d (camera) -->
  <rect x="880" y="37.400" width="9" height="7.400" rx="1" fill="#9d9d9d"/>
  <path d="M890 41 L893.600 37.600 V44.600 Z" fill="#9d9d9d"/>
  <path d="M897.800 37.400 L894.800 41 L897.800 44.800" fill="none" stroke="#9d9d9d" stroke-width="1.3"/>
 </g>

 <!-- canvas -->
 <rect x="429" y="198" width="538" height="492" fill="#ffffff"/>
 <!-- jellyfish -->
 <g id="jelly" stroke="#33494f" stroke-width="2.3" stroke-linecap="round" stroke-linejoin="round" fill="none">
  <!-- tentacles -->
  <g stroke="#3b474b" stroke-width="2.2">
  <path d="M579.7 481.7 C582 492 587 499 588.5 510 C590 522 581 528 581 538 C581 548 586 558 591 573"/>
  <path d="M626 479.5 C623 480.5 621.5 483 623 487 C625.5 493 629.5 497 630 503 C630.5 516 620 530 620 542 C619.5 553 624 561 629 567"/>
  <path d="M662 496.8 C664 503 668 508 669.5 516 C671.5 527 667 534 667.8 543 C668.5 552 674 558 675.5 566 C676.5 571 676 575 676 579"/>
  <path d="M694 477 C695 483 698 490 701 497 C704 503 707 508 705.5 514 C703 524 692 523 690.5 535 C689 546 692 555 695.5 562 C698 567 701 570 703.8 573"/>
  <path d="M752 490 C753.5 495 754 499 752 505 C749 513 745 517 745.5 524 C746 532 750 538 750 546 C750 555 749 563 746.5 569 C745 573 743 575 741 577"/>
  <path d="M792.8 487.5 C793.5 492 793 497 790.5 502 C787 509 782 514 782 520 C782 526 786 530 789 536 C792 542 795 546 794 552 C793 560 788 567 781.6 573"/>
  </g>
  <!-- skirt -->
  <path fill="#95d9e3" d="M576 420 L572.5 426 C566 438 560 452 550 458 C541 463 530 459 523 464 C517 469 517 475 523 480 C530 485 545 485 560 483.5 C578 482 596 476 611 473.6 C618 472.6 622 474 628 479 C636 486 643 495 655 496.5 C664 497 669 492 676 487 C684 481 694 473 704 470 C712 468 719 469.5 725 474 C733 480 740 487 753 490 C770 492.5 786 489.5 800 485.7 C814 482 829 475 838 469.5 C842.5 466.5 841 464 835 462.3 C827 460.3 812 459.5 800 455.4 C792 452 787 448 783.8 444.2 C779 438 776 432 772.6 426.7 C769 420 765 413 758.3 410.7 C756 410 753 410 750 411 Z"/>
  <!-- head -->
  <path fill="#95d9e3" d="M660 318.2 C700 318.2 757 350 757 386 C757 420 722 443.5 660 443.5 C605 443.5 552.3 425 552.3 390 C552.3 353 606 318.2 660 318.2 Z"/>
  <!-- eyes -->
  <path d="M597 369.6 C598 361 606 356.5 616 356.5 C628 356.5 637 362 638.5 371"/>
  <path d="M677.5 366.7 C679 358 688 353.6 698 353.6 C709 353.6 718 359 719.4 369"/>
 </g>
 <ellipse cx="685.5" cy="337.7" rx="8" ry="4" transform="rotate(14 685.5 337.7)" fill="#c9edf2"/>
 <ellipse cx="706" cy="343.5" rx="5" ry="3.2" transform="rotate(22 706 343.5)" fill="#c9edf2"/>
 <circle cx="833" cy="578.4" r="1.3" fill="#4a4a4a"/>
 <!-- red rect -->
 <rect x="440.5" y="289.5" width="438" height="332" fill="none" stroke="#d9414a" stroke-width="3"/>
 <!-- faint watermark -->
 <path d="M864 623.500 L867 620.500 L873 618 L876.500 613 L881 612 L881 623.500 Z" fill="#ffffff" opacity=".55"/>
 <path d="M881 613 L887 610 L886 616 L883 621 L888 628 L882 627 L876 625 L881 622 Z" fill="#ececec" opacity=".5"/>
 <!-- red arrow -->
 <path d="M424.3 635.2 L444.1 619.9 L463.9 604.6 L532.6 555.2 L528.0 551.7 L546.5 548.3 L538.7 563.2 L536.4 558.6 L466.6 608.4 L445.7 622.2 L424.9 636.0 Z" fill="#ee3a33"/>
</svg>
</body>
</html>
